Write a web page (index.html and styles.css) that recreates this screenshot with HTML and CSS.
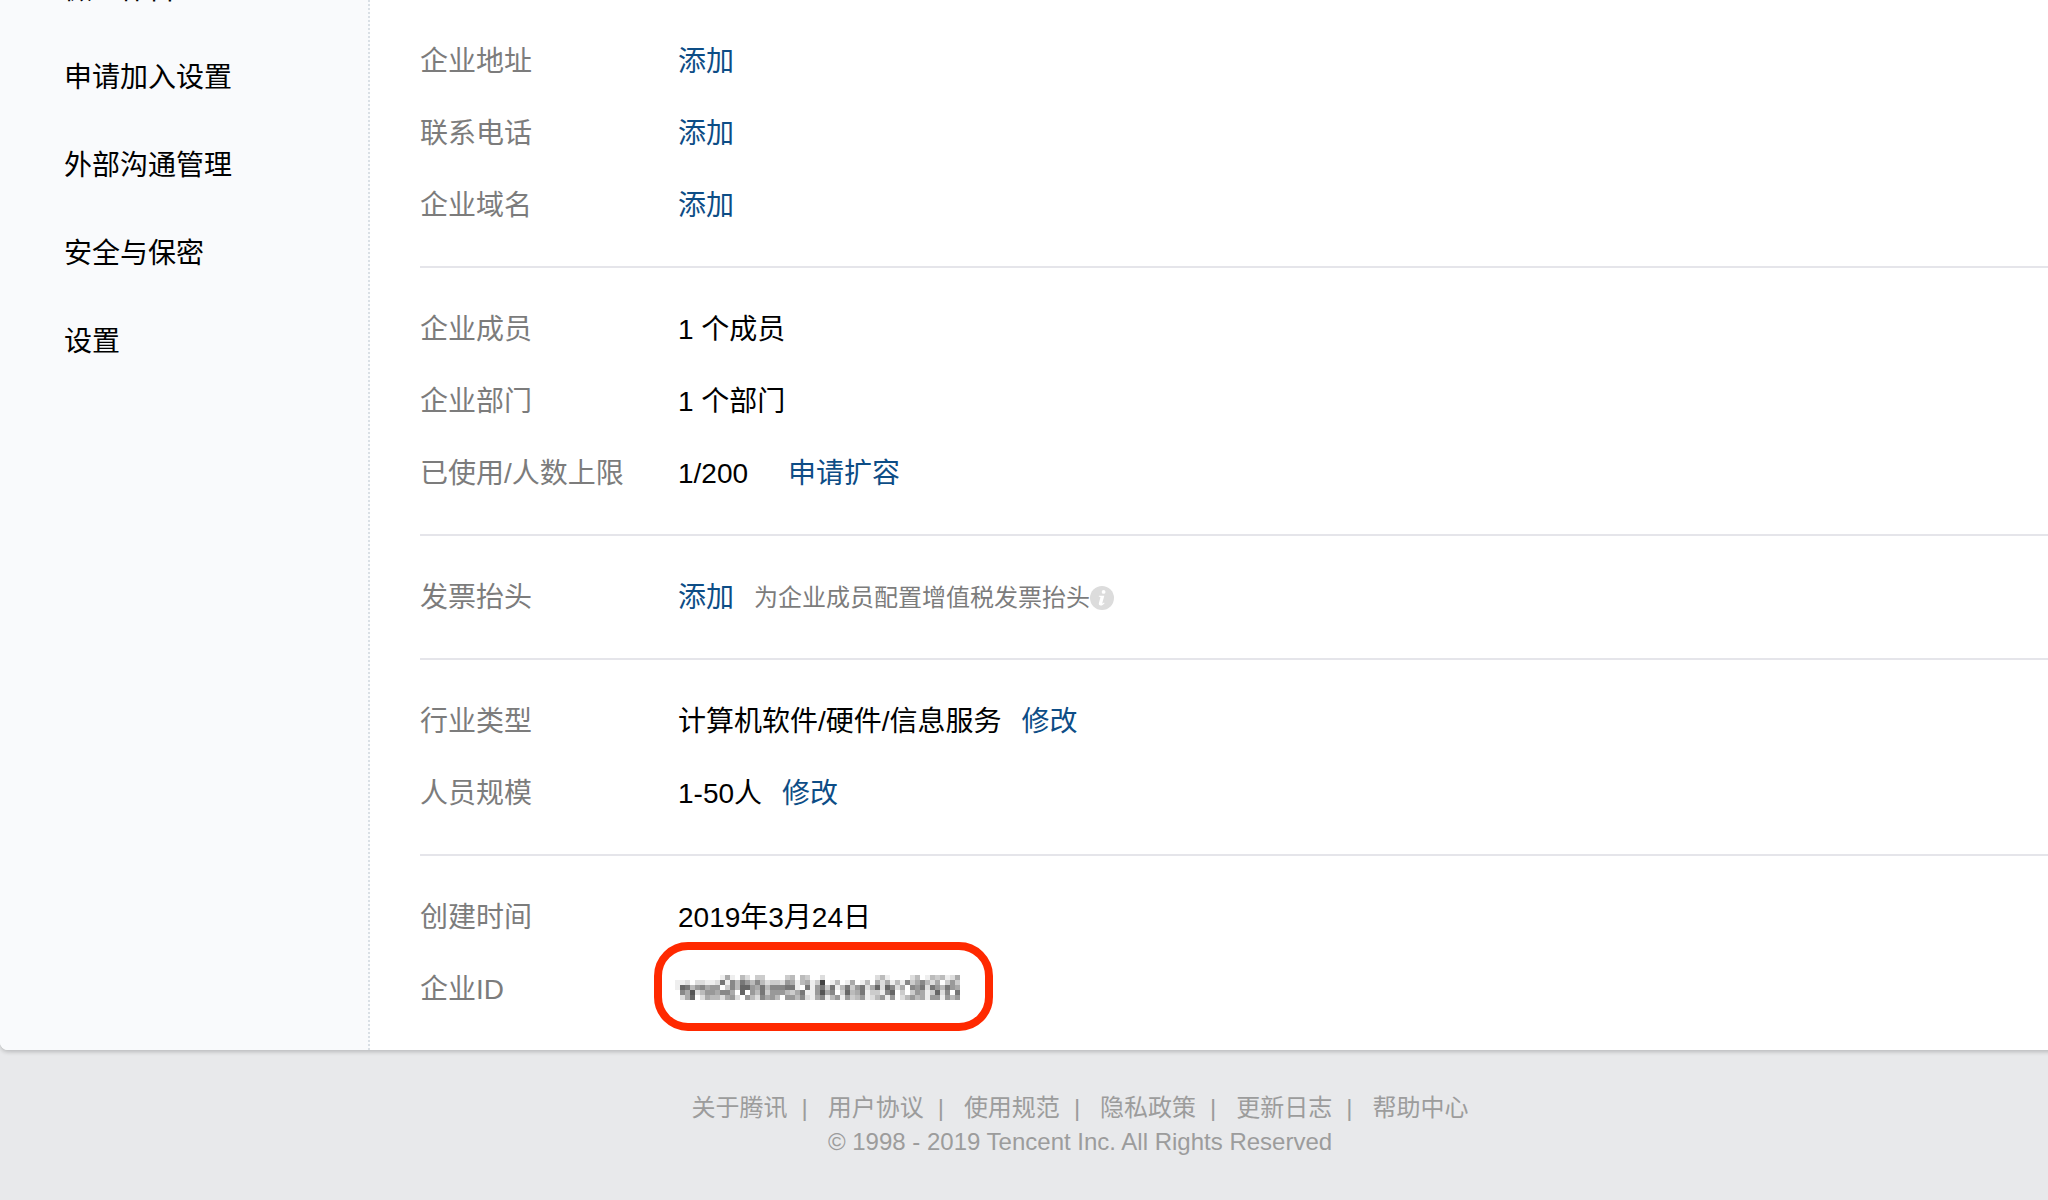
FILE: index.html
```html
<!DOCTYPE html>
<html lang="zh-CN">
<head>
<meta charset="utf-8">
<meta name="viewport" content="width=device-width, initial-scale=1">
<title>企业信息</title>
<link rel="stylesheet" href="styles.css">
</head>
<body>
<div class="panel">
  <nav class="sidebar">
    <ul class="menu">
      <li><a href="#">微工作台</a></li>
      <li><a href="#">申请加入设置</a></li>
      <li><a href="#">外部沟通管理</a></li>
      <li><a href="#">安全与保密</a></li>
      <li><a href="#">设置</a></li>
    </ul>
  </nav>
  <main class="content">
    <dl class="group">
      <div class="row"><dt>企业地址</dt><dd><a href="#">添加</a></dd></div>
      <div class="row"><dt>联系电话</dt><dd><a href="#">添加</a></dd></div>
      <div class="row"><dt>企业域名</dt><dd><a href="#">添加</a></dd></div>
    </dl>
    <dl class="group">
      <div class="row"><dt>企业成员</dt><dd>1 个成员</dd></div>
      <div class="row"><dt>企业部门</dt><dd>1 个部门</dd></div>
      <div class="row"><dt>已使用/人数上限</dt><dd class="wide"><span>1/200</span><a href="#">申请扩容</a></dd></div>
    </dl>
    <dl class="group">
      <div class="row"><dt>发票抬头</dt><dd><a href="#">添加</a><span class="hint">为企业成员配置增值税发票抬头<svg class="info" viewBox="0 0 24 24" role="img" aria-label="说明"><circle cx="12" cy="12" r="12" fill="#dcdcdc"/><circle cx="13.6" cy="5.9" r="1.9" fill="#fff"/><path d="M9 9.8h5.3l-2 7.2c-.2.8.3.9 1.7-.4l.6.6c-1.400 1.700-2.600 2.400-3.900 2.400-1.600 0-2.200-1-1.800-2.500l1.500-5.500c.1-.6-.1-.8-1.600-.9z" fill="#fff"/></svg></span></dd></div>
    </dl>
    <dl class="group">
      <div class="row"><dt>行业类型</dt><dd><span>计算机软件/硬件/信息服务</span><a href="#">修改</a></dd></div>
      <div class="row"><dt>人员规模</dt><dd><span>1-50人</span><a href="#">修改</a></dd></div>
    </dl>
    <dl class="group">
      <div class="row"><dt>创建时间</dt><dd>2019年3月24日</dd></div>
      <div class="row"><dt>企业ID</dt><dd><span class="masked"><svg class="mosaic" id="mosaic" viewBox="0 0 57 5" shape-rendering="crispEdges" role="img" aria-label="已打码"></svg></span></dd></div>
    </dl>
  </main>
</div>
<footer class="footer">
  <div class="links">
    <a href="#">关于腾讯</a><a href="#">用户协议</a><a href="#">使用规范</a><a href="#">隐私政策</a><a href="#">更新日志</a><a href="#">帮助中心</a>
  </div>
  <p class="copyright">© 1998 - 2019 Tencent Inc. All Rights Reserved</p>
</footer>
<script src="mosaic.js"></script>
</body>
</html>
```
FILE: styles.css
```css
* {
  box-sizing: border-box;
}

body {
  margin: 0;
  overflow-x: hidden;
  background: #e8e9eb;
  color: #000;
  font-family: "Liberation Sans", "Noto Sans CJK SC", sans-serif;
  font-size: 28px;
}

a {
  color: #0d4d86;
  text-decoration: none;
}

.panel {
  display: flex;
  margin-right: -20px;
  overflow: hidden;
  background: #fff;
  border-radius: 0 0 8px 8px;
  box-shadow: 0 2px 4px rgba(0, 0, 0, 0.2);
}

.sidebar {
  flex: 0 0 370px;
  background: #f9fafc;
  border-right: 2px dotted #d9dfe5;
}

.menu {
  margin: -54px 0 0;
  padding: 0;
  list-style: none;
}

.menu a {
  display: block;
  padding-left: 64px;
  line-height: 88px;
  color: #000;
}

.content {
  flex: 1;
  padding-left: 50px;
}

.group {
  margin: 0;
  padding: 26px 0 24px;
}

.group + .group {
  border-top: 2px solid #e5e5ea;
}

.row {
  display: flex;
  height: 72px;
  line-height: 72px;
}

dt {
  flex: 0 0 258px;
  color: #7c7c7c;
}

dd {
  display: flex;
  align-items: center;
  gap: 20px;
  margin: 0;
}

dd.wide {
  gap: 40px;
}

.hint {
  display: flex;
  align-items: center;
  font-size: 24px;
  color: #7c7c7c;
}

.info {
  width: 24px;
  height: 24px;
}

.masked {
  position: relative;
  display: flex;
  align-self: flex-start;
  margin: 21px 0 0 -3px;
}

.masked::after {
  content: "";
  position: absolute;
  inset: -33px -33px -31px -21px;
  border: 8px solid #ff2900;
  border-radius: 34px;
}

.mosaic {
  width: 285px;
  height: 25px;
}

.footer {
  padding: 41px 0 40px 112px;
  font-size: 24px;
  line-height: 34px;
  text-align: center;
  color: #9c9c9c;
}

.links {
  display: flex;
  justify-content: center;
}

.links a {
  color: #9c9c9c;
}

.links a + a::before {
  content: "|";
  margin: 0 20px 0 14px;
}

.copyright {
  margin: 0;
}
```
FILE: mosaic.js
```js
// Grey level of each tile, one hex digit per tile, one string per row.
const rows = [
  "fffffffffeaefbdfccf" + "fffcbfbcffdfffffffff" + "fdbeffffdbfebcbeda",
  "eedfddeed7e8b79b8bd" + "ccd9aebaec4febfeafeb" + "fadaebe8ca8bdafc9c",
  "e67b98a99fc8b669a7b" + "88877ef7e97c7eb7c97d" + "a6d68daf897d79b79a",
  "f8a5db99a88af6f9b7c" + "999bca7ee95a8fc6ba7e" + "cce86fcfc9aec6d8f7",
  "fda6fdabbda9df9bd8a" + "9bf99b8dea8eb9e9cb9e" + "db9e9fdb9bae99e9b9"
];

const mosaic = document.getElementById("mosaic");
rows.forEach((row, y) => {
  [...row].forEach((level, x) => {
    const tile = document.createElementNS("http://www.w3.org/2000/svg", "rect");
    tile.setAttribute("x", x);
    tile.setAttribute("y", y);
    tile.setAttribute("width", 1);
    tile.setAttribute("height", 1);
    tile.setAttribute("fill", "#" + level.repeat(3));
    mosaic.append(tile);
  });
});
```
